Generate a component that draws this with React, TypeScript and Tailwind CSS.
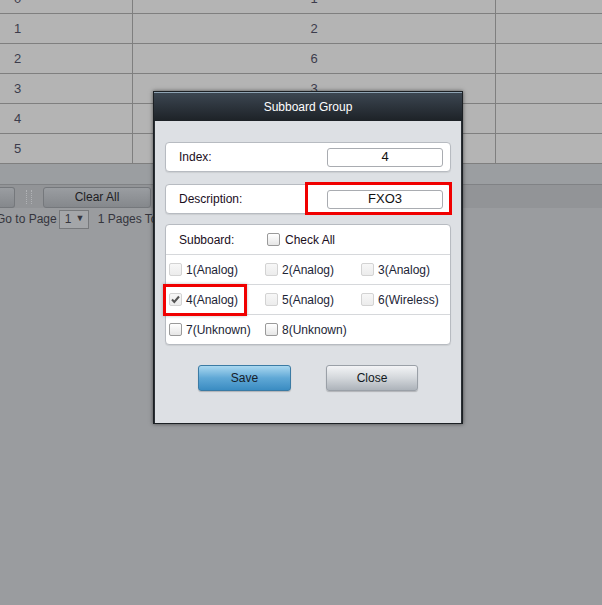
import React from "react";

const font = { fontFamily: '"Liberation Sans", Arial, sans-serif' };

const rows = [
  ["0", "1"],
  ["1", "2"],
  ["2", "6"],
  ["3", "3"],
  ["4", "4"],
  ["5", "5"],
];

function Check({ checked, disabled }: { checked?: boolean; disabled?: boolean }) {
  return (
    <span
      className={
        "relative inline-block h-[13px] w-[13px] shrink-0 rounded-[2px] border " +
        (disabled
          ? "border-[#d3d3d3] bg-gradient-to-b from-[#f7f7f7] to-[#ececec]"
          : "border-[#9a9a9a] bg-gradient-to-b from-[#ffffff] to-[#e6e6e6]")
      }
    >
      {checked && (
        <svg viewBox="0 0 13 13" className="absolute left-[-1px] top-[-1px] h-[13px] w-[13px]">
          <path d="M3 6.5 L5.3 9 L10 3.5" fill="none" stroke="#555" strokeWidth="2" />
        </svg>
      )}
    </span>
  );
}

function Option({ label, checked, disabled }: { label: string; checked?: boolean; disabled?: boolean }) {
  return (
    <div className="flex w-[96px] shrink-0 items-center gap-[4px]">
      <Check checked={checked} disabled={disabled} />
      <span className="whitespace-nowrap text-[12px] text-[#1c2436]">{label}</span>
    </div>
  );
}

export default function App() {
  return (
    <div className="relative h-[605px] w-[602px] overflow-hidden bg-[#9a9c9f]" style={font}>
      {/* dimmed page underneath */}
      <div className="mt-[-16px] bg-[#b4b4b4]">
        {rows.map((r) => (
          <div key={r[0]} className="flex h-[30px] border-b border-[#7f7f7f] text-[13px] text-[#3c3c4c]">
            <div className="flex w-[133px] items-center border-r border-[#7f7f7f] pl-[14px]">{r[0]}</div>
            <div className="flex w-[363px] items-center justify-center border-r border-[#7f7f7f]">{r[1]}</div>
            <div className="flex-1" />
          </div>
        ))}
      </div>
      <div className="h-[20px] bg-[#9b9ea1]" />
      <div className="flex h-[24px] items-center border-t border-[#808285] bg-[#929497] pt-[1px]">
        <div className="h-[21px] w-[15px] rounded-r-[3px] border border-l-0 border-[#75787c] bg-gradient-to-b from-[#9a9da1] to-[#85888c]" />
        <div className="mx-[3px] flex h-[21px] w-[22px] items-center justify-center">
          <div className="h-[14px] w-[6px] border-x border-dotted border-[#b0b2b5]" />
        </div>
        <div className="flex h-[21px] w-[108px] items-center justify-center rounded-[3px] border border-[#75787c] bg-gradient-to-b from-[#9a9da1] to-[#85888c] text-[12px] text-[#1e1e24]">
          Clear All
        </div>
      </div>
      <div className="ml-[-4px] mt-[1px] flex h-[20px] items-center text-[12px] text-[#35353d]">
        <span>Go to Page</span>
        <span className="ml-[2px] flex h-[19px] w-[30px] items-center gap-[4px] border border-[#77797c] bg-[#a4a6a9] pl-[5px]">
          <span>1</span>
          <span className="text-[9px]">▼</span>
        </span>
        <span className="ml-[9px]">1 Pages Total</span>
      </div>

      {/* dialog */}
      <div className="absolute left-[153px] top-[91px] w-[310px] border border-[#1c2024] bg-[#dde0e4] shadow-[0_0_4px_rgba(0,0,0,0.55)]">
        <div className="flex h-[29px] items-center justify-center border-t border-[#8ea2b2] bg-gradient-to-b from-[#3c4651] to-[#1d2227] text-[12px] text-white">
          Subboard Group
        </div>
        <div className="border-x border-[#2b3035] px-[10px] pb-[32px] pt-[21px]">
          <div className="flex h-[30px] items-center justify-between rounded-[4px] border border-[#b7bbc1] bg-white pl-[13px] pr-[7px] shadow-[0_1px_1px_rgba(0,0,0,0.08)]">
            <span className="text-[12px] text-[#1a0e1c]">Index:</span>
            <div className="flex h-[19px] w-[116px] items-center justify-center rounded-[3px] border border-[#a9acb1] text-[13px] text-[#111]">
              4
            </div>
          </div>
          <div className="mt-[12px] flex h-[30px] items-center justify-between rounded-[4px] border border-[#b7bbc1] bg-white pl-[13px] pr-[7px] shadow-[0_1px_1px_rgba(0,0,0,0.08)]">
            <span className="text-[12px] text-[#1a0e1c]">Description:</span>
            <div className="flex h-[19px] w-[116px] items-center justify-center rounded-[3px] border border-[#a9acb1] text-[13px] text-[#111]">
              FXO3
            </div>
          </div>
          <div className="mt-[10px] overflow-hidden rounded-[4px] border border-[#b7bbc1] bg-white shadow-[0_1px_1px_rgba(0,0,0,0.08)]">
            <div className="flex h-[30px] items-center border-b border-[#d6d8db]">
              <span className="w-[101px] pl-[13px] text-[12px] text-[#1a0e1c]">Subboard:</span>
              <Check />
              <span className="ml-[5px] text-[12px] text-[#1a0e1c]">Check All</span>
            </div>
            <div className="flex h-[30px] items-center border-b border-[#d6d8db] pl-[3px]">
              <Option label="1(Analog)" disabled />
              <Option label="2(Analog)" disabled />
              <Option label="3(Analog)" disabled />
            </div>
            <div className="flex h-[30px] items-center border-b border-[#d6d8db] pl-[3px]">
              <Option label="4(Analog)" checked disabled />
              <Option label="5(Analog)" disabled />
              <Option label="6(Wireless)" disabled />
            </div>
            <div className="flex h-[29px] items-center pl-[3px]">
              <Option label="7(Unknown)" />
              <Option label="8(Unknown)" />
            </div>
          </div>
          <div className="mt-[20px] flex justify-center gap-[35px]">
            <button className="h-[26px] w-[93px] rounded-[3px] border border-[#3b7ba4] bg-gradient-to-b from-[#a9d8f0] via-[#5fa8d6] to-[#3a8cc2] text-[12px] text-[#16202a] shadow-[0_1px_1px_rgba(0,0,0,0.2)]">
              Save
            </button>
            <button className="h-[26px] w-[92px] rounded-[3px] border border-[#9aa0a7] bg-gradient-to-b from-[#f3f4f6] via-[#d3d7db] to-[#adb3ba] text-[12px] text-[#101820] shadow-[0_1px_1px_rgba(0,0,0,0.2)]">
              Close
            </button>
          </div>
        </div>

        {/* annotation boxes */}
        <div className="absolute left-[151px] top-[90px] h-[33px] w-[147px] border-[3px] border-[#f00000]" />
        <div className="absolute left-[9px] top-[192px] h-[32px] w-[84px] border-[3px] border-[#f00000] shadow-[0_0_3px_rgba(0,0,0,0.25)]" />
      </div>
    </div>
  );
}
